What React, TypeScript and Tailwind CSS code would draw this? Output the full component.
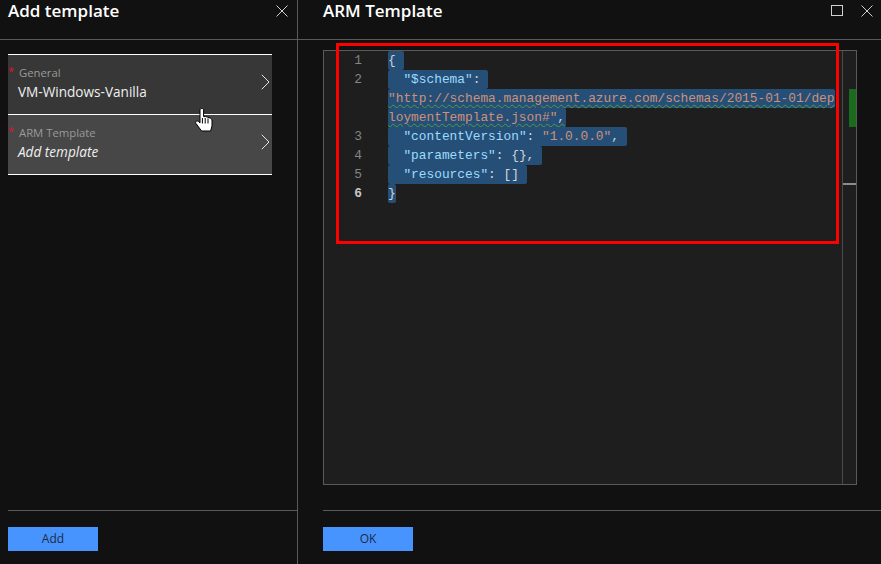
const uiFont = 'font-["Open_Sans","Noto_Sans",sans-serif]';

function CloseIcon() {
  return (
    <svg width="12" height="12" viewBox="0 0 12 12" className="block">
      <path d="M0.5 0.5 L11.5 11.5 M11.5 0.5 L0.5 11.5" stroke="#d0d0d0" strokeWidth="1" fill="none" />
    </svg>
  );
}

function Chevron() {
  return (
    <svg width="9" height="16" viewBox="0 0 9 16" className="block mb-[5px]">
      <path d="M0.8 0.8 L8 8 L0.8 15.2" stroke="#e4e4e4" strokeWidth="1" fill="none" />
    </svg>
  );
}

function Hand() {
  return (
    <svg width="18" height="24" viewBox="0 0 18 24" className="block">
      <path
        d="M5 2 C5 0 8.6 0 8.6 2 L8.6 8.6 L10.6 8.6 L12.8 9.2 L15.2 10 C16.6 10.6 17 11.6 17 13 L17 18 L15.6 23 L6.6 23 L1 15.6 C-0.2 13.8 2 12.2 3.4 13.4 L5 15 Z"
        fill="#ffffff"
        stroke="#000000"
        strokeWidth="1"
      />
      <path d="M7.4 10 L7.4 15.5 M10.2 10 L10.2 15.5 M13 10.4 L13 15.5" stroke="#000000" strokeWidth="1" fill="none" />
    </svg>
  );
}

function Card({ label, value, dark, italic }: { label: string; value: string; dark?: boolean; italic?: boolean }) {
  return (
    <div className={`h-[60px] border-t border-white flex items-center justify-between pr-[2px] ${dark ? 'bg-[#373737]' : 'bg-[#474747]'}`}>
      <div className="mb-[3px]">
        <div className="flex text-[11.3px] leading-[14px] text-[#9a9a9a]">
          <span className="w-[11px] text-[#e0102a] text-[11px] leading-[10px]">*</span>
          <span>{label}</span>
        </div>
        <div className={`ml-[10px] mt-[3px] text-[13.6px] leading-[18px] text-[#f0f0f0] font-medium ${italic ? 'italic' : ''}`}>{value}</div>
      </div>
      <Chevron />
    </div>
  );
}

function Footer({ label }: { label: string }) {
  return (
    <div className="h-[54px] shrink-0 border-t border-[#5a5a5a] pt-[16px]">
      <button className="block w-[90px] h-[24px] bg-[#4894fe] text-[#1c2b45] text-[12px] leading-[24px] text-center">{label}</button>
    </div>
  );
}

const key = 'text-[#9cdcfe]';
const str = 'text-[#ce9178]';
const pun = 'text-[#d4d4d4]';

// each row: gutter number, selection width, spans
const rows = [
  { n: '1', w: 16, parts: [['{', pun]] },
  { n: '2', w: 100, parts: [['  ', pun], ['"$schema"', key], [':', pun]] },
  { n: '', w: 447, wavy: true, parts: [['"http://schema.management.azure.com/schemas/2015-01-01/dep', str]] },
  { n: '', w: 178, wavy: true, parts: [['loymentTemplate.json#"', str], [',', pun]] },
  { n: '3', w: 239, parts: [['  ', pun], ['"contentVersion"', key], [': ', pun], ['"1.0.0.0"', str], [',', pun]] },
  { n: '4', w: 154, parts: [['  ', pun], ['"parameters"', key], [': {},', pun]] },
  { n: '5', w: 139, parts: [['  ', pun], ['"resources"', key], [': []', pun]] },
  { n: '6', w: 8, parts: [['}', pun]] },
];

function Editor() {
  return (
    <div className="mt-[10px] h-[435px] mr-[24px] border border-[#5a5a5a] bg-[#1e1e1e] flex font-['Liberation_Mono',monospace] text-[12.83px]">
      <div className="flex-1">
        {rows.map((r, i) => (
          <div key={i} className="flex h-[19px] leading-[19px]">
            <div className={`w-[38px] text-right shrink-0 ${r.n === '6' ? 'text-[#c6c6c6] font-bold' : 'text-[#858585]'}`}>{r.n}</div>
            <div className="ml-[26px] bg-[#264f78] rounded-[2px] whitespace-pre" style={{ width: r.w }}>
              <span className={r.wavy ? 'underline decoration-wavy decoration-[#4f9a45] decoration-1 underline-offset-2' : ''}>
                {r.parts.map((p, j) => (
                  <span key={j} className={p[1]}>{p[0]}</span>
                ))}
              </span>
            </div>
          </div>
        ))}
      </div>
      <div className="w-[14px] shrink-0 border-l border-[#4a4a4a]">
        <div className="ml-[6px] mt-[38px] h-[38px] bg-[#1a6b1d]" />
        <div className="mt-[56px] h-[2px] bg-[#8c8c8c]" />
      </div>
    </div>
  );
}

export default function App() {
  return (
    <div className={`relative w-[881px] h-[564px] overflow-hidden bg-[#111111] flex ${uiFont}`}>
      <div className="w-[298px] shrink-0 border-r border-[#5a5a5a] flex flex-col pl-[8px]">
        <div className="h-[40px] shrink-0 -ml-[8px] pl-[8px] pr-[9px] border-b border-[#5a5a5a] flex justify-between">
          <h1 className="text-[17px] leading-[21px] font-semibold text-white">Add template</h1>
          <div className="pt-[5px]"><CloseIcon /></div>
        </div>
        <div className="flex-1 pt-[14px]">
          <div className="w-[264px] border-b border-white">
            <Card label="General" value="VM-Windows-Vanilla" dark />
            <Card label="ARM Template" value="Add template" italic />
          </div>
        </div>
        <div className="-ml-[8px] pl-[8px] border-0">
          <Footer label="Add" />
        </div>
      </div>

      <div className="flex-1 flex flex-col">
        <div className="h-[40px] shrink-0 pl-[25px] pr-[8px] border-b border-[#5a5a5a] flex justify-between">
          <h1 className="text-[17px] leading-[21px] font-semibold text-white">ARM Template</h1>
          <div className="flex gap-[18px] pt-[4px]">
            <div className="w-[12px] h-[11px] border border-[#d0d0d0] mt-[1px]" />
            <div className="pt-[1px]"><CloseIcon /></div>
          </div>
        </div>
        <div className="flex-1 pl-[25px]">
          <Editor />
        </div>
        <div className="pl-[25px]">
          <Footer label="OK" />
        </div>
      </div>

      {/* annotation + cursor sit on top of the screenshot */}
      <div className="absolute left-[336px] top-[43px] w-[503px] h-[201px] border-[3px] border-[#fe0000]" />
      <div className="absolute left-[195px] top-[108px]"><Hand /></div>
    </div>
  );
}
